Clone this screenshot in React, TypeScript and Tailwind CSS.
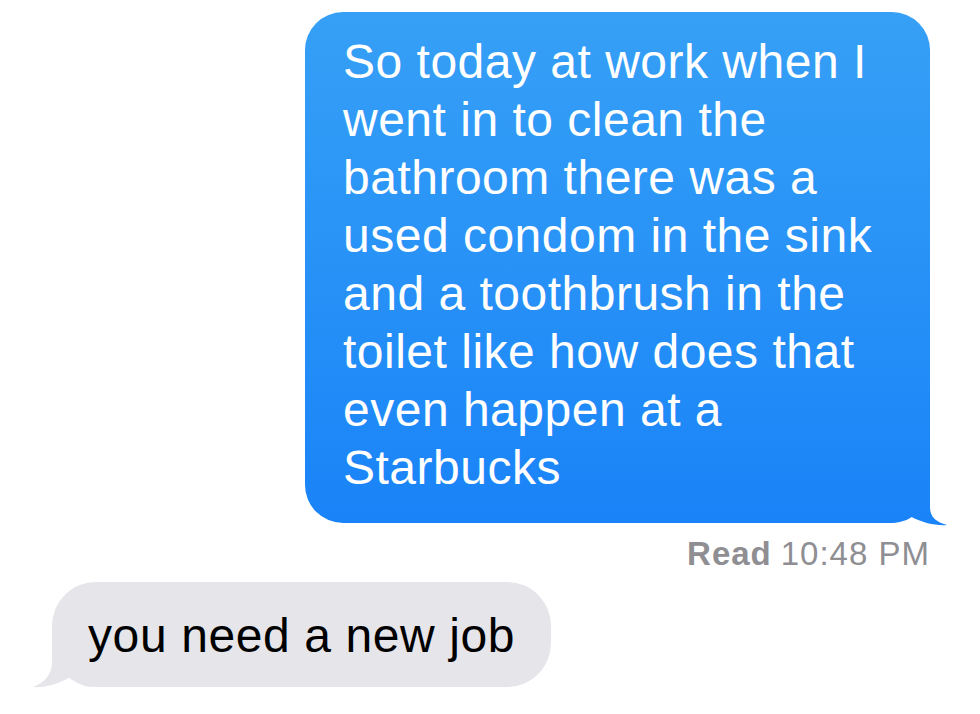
import React from "react";

const blueLines = [
  "So today at work when I",
  "went in to clean the",
  "bathroom there was a",
  "used condom in the sink",
  "and a toothbrush in the",
  "toilet like how does that",
  "even happen at a",
  "Starbucks",
];

export default function App() {
  return (
    <div
      className="w-[980px] h-[714px] bg-white overflow-hidden pt-[12px]"
      style={{ fontFamily: '"Liberation Sans", Arial, sans-serif' }}
    >
      <div className="flex justify-end pr-[50px]">
        <div className="relative w-[625px] rounded-[38px] bg-gradient-to-b from-[#36a0f6] to-[#1983f8] pl-[38px] pr-[20px] pt-[21px] pb-[26px] text-white text-[48px] leading-[58px] tracking-[0.5px]">
          <svg
            className="absolute right-[-20px] bottom-[-4px]"
            width="80"
            height="60"
            viewBox="0 0 80 60"
          >
            <defs>
              <linearGradient
                id="bt"
                gradientUnits="userSpaceOnUse"
                x1="0"
                y1="-455"
                x2="0"
                y2="56"
              >
                <stop offset="0" stopColor="#36a0f6" />
                <stop offset="1" stopColor="#1983f8" />
              </linearGradient>
            </defs>
            <path
              d="M20,0 L60,0 L60,40 C60,50 66,55 77,58 C67,59 52,56 40,49 C34,53 28,56 20,56 Z"
              fill="url(#bt)"
            />
          </svg>
          <div className="relative">
            {blueLines.map((l, i) => (
              <div key={i} className="whitespace-nowrap">
                {l}
              </div>
            ))}
          </div>
        </div>
      </div>
      <div className="flex justify-end pr-[50px] mt-[11px] text-[33px] leading-[40px] text-[#8e8e93] tracking-[1px]">
        <span className="font-bold">Read</span>
        <span className="ml-[9px]">10:48 PM</span>
      </div>
      <div className="flex pl-[52px] mt-[8px]">
        <div className="relative h-[105px] rounded-[44px] bg-[#e5e5ea] pl-[36px] pr-[36px] pt-[25px] text-black text-[48px] leading-[58px] tracking-[0.6px] whitespace-nowrap">
          <svg
            className="absolute left-[-20px] top-[45px]"
            width="80"
            height="62"
            viewBox="0 0 80 62"
          >
            <path
              d="M60,0 L20,0 L20,35 C20,48 12,56 1,60 C12,61 27,57 38,50 C44,55 52,60 60,60 Z"
              fill="#e5e5ea"
            />
          </svg>
          <span className="relative">you need a new job</span>
        </div>
      </div>
    </div>
  );
}
